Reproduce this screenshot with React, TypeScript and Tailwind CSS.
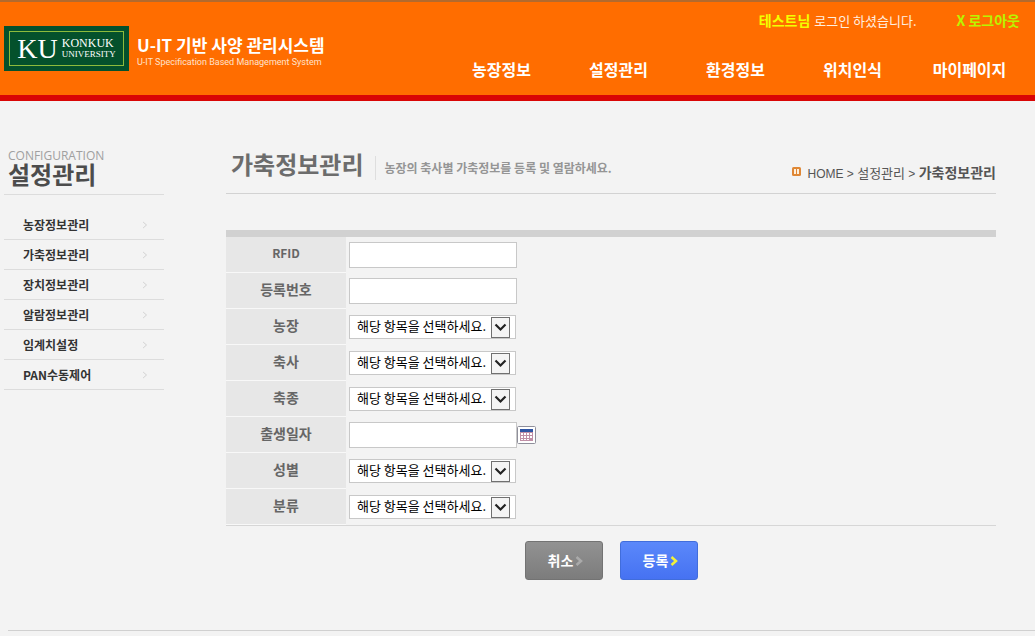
import React from "react";

const navItems = ["농장정보", "설정관리", "환경정보", "위치인식", "마이페이지"];

const sideItems = [
  "농장정보관리",
  "가축정보관리",
  "장치정보관리",
  "알람정보관리",
  "임계치설정",
  "PAN수동제어",
];

type Field = { id: string; label: string; kind: "text" | "select" | "date" };

const fields: Field[] = [
  { id: "rfid", label: "RFID", kind: "text" },
  { id: "regno", label: "등록번호", kind: "text" },
  { id: "farm", label: "농장", kind: "select" },
  { id: "barn", label: "축사", kind: "select" },
  { id: "species", label: "축종", kind: "select" },
  { id: "birth", label: "출생일자", kind: "date" },
  { id: "sex", label: "성별", kind: "select" },
  { id: "category", label: "분류", kind: "select" },
];

function Chevron({ className }: { className: string }) {
  return (
    <svg viewBox="0 0 8 10" className={className} fill="none" aria-hidden="true">
      <path d="M1.5 1 L6 5 L1.5 9" stroke="currentColor" />
    </svg>
  );
}

function CalendarIcon() {
  return (
    <svg width="19" height="18" viewBox="0 0 19 18" aria-hidden="true">
      <rect x="0.5" y="0.5" width="18" height="17" rx="1" fill="#fff" stroke="#8f8f9b" />
      <rect x="3" y="3" width="13" height="12" fill="#c08fa6" />
      <rect x="3" y="3" width="13" height="3" fill="#2f55a4" />
      <path
        d="M4 7h2v2h-2z M7 7h2v2h-2z M10 7h2v2h-2z M13 7h2v2h-2z M4 10h2v2h-2z M7 10h2v2h-2z M10 10h2v2h-2z M13 10h2v2h-2z M4 13h2v1h-2z M7 13h2v1h-2z M10 13h2v1h-2z"
        fill="#fff"
      />
    </svg>
  );
}

function Logo() {
  return (
    <div className="bg-[#04512c] p-[5px]">
      <div className="flex h-[35px] w-[115px] items-center justify-center gap-1 border border-[#8dbb3c] font-['Liberation_Serif',serif] text-white">
        <span className="text-[28px] leading-none">KU</span>
        <span className="flex flex-col">
          <span className="text-[12px] leading-3">KONKUK</span>
          <span className="text-[9px] leading-[11px]">UNIVERSITY</span>
        </span>
      </div>
    </div>
  );
}

function Header() {
  return (
    <header className="flex justify-between border-t-2 border-b-[6px] border-t-[#b26a2e] border-b-[#d90505] bg-[#ff6d00] text-white">
      <a href="#home" className="mt-6 flex items-start gap-2 pl-1">
        <Logo />
        <span className="flex flex-col pt-2 whitespace-nowrap">
          <span className="text-[17px] leading-[22px] font-bold">U-IT 기반 사양 관리시스템</span>
          <span className="font-[Roboto,sans-serif] text-[9px] leading-3 text-[#ffe2cc]">
            U-IT Specification Based Management System
          </span>
        </span>
      </a>
      <div className="flex h-[93px] flex-col items-end">
        <div className="flex gap-10 pt-2 pr-[15px] leading-5">
          <p className="text-[13px] text-[#fff0e0]">
            <strong className="mr-1 text-[14px] text-[#f4ff00]">테스트님</strong>
            로그인 하셨습니다.
          </p>
          <a href="#logout" className="text-[14px] font-bold text-[#b9f400]">
            X 로그아웃
          </a>
        </div>
        <nav className="mt-[26px] flex pr-[7px]">
          {navItems.map((item) => (
            <a key={item} href="#menu" className="w-[117px] text-center text-[16px] leading-6 font-bold">
              {item}
            </a>
          ))}
        </nav>
      </div>
    </header>
  );
}

function Sidebar() {
  return (
    <aside className="w-40 shrink-0">
      <div className="h-[46px] border-b border-[#dcdcdc] pl-1">
        <p className="font-['Open_Sans',sans-serif] text-[12px] leading-[14px] text-[#a0a0a0]">CONFIGURATION</p>
        <h2 className="text-[24px] leading-[22px] font-bold text-[#4c4c4c]">설정관리</h2>
      </div>
      <ul className="mt-[15px]">
        {sideItems.map((item) => (
          <li key={item} className="border-b border-[#dcdcdc]">
            <a
              href="#section"
              className="flex h-[29px] items-center justify-between pr-4 pl-[19px] text-[12px] font-bold text-[#333]"
            >
              {item}
              <Chevron className="h-2 w-1.5 text-[#c4c4c4]" />
            </a>
          </li>
        ))}
      </ul>
    </aside>
  );
}

function SelectBox({ id }: { id: string }) {
  return (
    <div className="relative w-[167px]">
      <select
        id={id}
        className="block h-6 w-full appearance-none border border-[#c8c8c8] bg-white pr-6 pb-0.5 pl-[7px] text-[13px] leading-5 text-black"
      >
        <option>해당 항목을 선택하세요.</option>
      </select>
      <span className="pointer-events-none absolute top-0.5 right-1.5 flex h-[21px] w-[19px] items-center justify-center border border-[#707070] bg-[#f4f4f4]">
        <svg width="13" height="9" viewBox="0 0 13 9" fill="none" aria-hidden="true">
          <path d="M1.5 1.5 L6.5 6.5 L11.5 1.5" stroke="#222" strokeWidth="2.2" />
        </svg>
      </span>
    </div>
  );
}

function FieldControl({ field }: { field: Field }) {
  if (field.kind === "select") return <SelectBox id={field.id} />;
  return (
    <div className="flex items-center">
      <input
        id={field.id}
        type="text"
        className="block h-[26px] w-[168px] border border-[#c8c8c8] bg-white px-1 text-[13px] text-black"
      />
      {field.kind === "date" && (
        <button type="button" aria-label="달력">
          <CalendarIcon />
        </button>
      )}
    </div>
  );
}

function TitleBar() {
  return (
    <div className="flex h-[45px] justify-between border-b border-[#d2d2d2]">
      <div className="flex items-start pl-[5px]">
        <h1 className="text-[24px] leading-[30px] font-bold text-[#6c6c6c]">가축정보관리</h1>
        <p className="mt-[7px] ml-3 border-l border-[#dedede] pl-2 text-[12px] leading-6 font-bold text-[#959595]">
          농장의 축사별 가축정보를 등록 및 열람하세요.
        </p>
      </div>
      <div className="mt-2.5 flex h-7 items-center gap-[7px] text-[12px] text-[#555]">
        <svg width="9" height="9" viewBox="0 0 9 9" className="mb-1" aria-hidden="true">
          <rect width="9" height="9" rx="1.5" fill="#df8735" />
          <rect x="2" y="2" width="2" height="5" fill="#fff0dc" />
          <rect x="5" y="2" width="2" height="5" fill="#fff0dc" />
        </svg>
        <p className="font-['Liberation_Sans','Noto_Sans_CJK_KR',sans-serif]">
          HOME &gt; <span className="text-[13px]">설정관리</span> &gt;{" "}
          <strong className="text-[14px]">가축정보관리</strong>
        </p>
      </div>
    </div>
  );
}

export default function App() {
  return (
    <div className="min-h-screen bg-[#f3f3f3] font-['Noto_Sans_CJK_KR',sans-serif]">
      <Header />
      <div className="flex gap-[62px] pt-12 pr-[39px] pl-1">
        <Sidebar />
        <main className="min-w-0 flex-1">
          <TitleBar />
          <form className="mt-9" onSubmit={(e) => e.preventDefault()}>
            <table className="w-full border-separate border-spacing-0 border-t-[7px] border-b border-t-[#d1d1d1] border-b-[#d6d6d6]">
              <tbody>
                {fields.map((field) => (
                  <tr key={field.id} className="h-9">
                    <th className="w-[120px] border-b border-[#f8f8f8] bg-[#e7e7e7] p-0 pb-1 text-[14px] leading-5 font-bold text-[#666]">
                      <label htmlFor={field.id} className={field.id === "rfid" ? "text-[12px]" : ""}>
                        {field.label}
                      </label>
                    </th>
                    <td className="p-0 pl-[3px]">
                      <FieldControl field={field} />
                    </td>
                  </tr>
                ))}
              </tbody>
            </table>
            <div className="mt-[15px] flex justify-center gap-[17px] text-[14px] font-bold text-white">
              <button
                type="button"
                className="flex h-[39px] w-[78px] items-center justify-center gap-0.5 rounded-[3px] border border-[#737373] bg-linear-to-b from-[#929292] to-[#7c7c7c] pl-1"
              >
                취소
                <Chevron className="h-2.5 w-2 stroke-[2.5] text-[#aaa]" />
              </button>
              <button
                type="submit"
                className="flex h-[39px] w-[78px] items-center justify-center gap-0.5 rounded-[3px] border border-[#416ddb] bg-linear-to-b from-[#5b88fa] to-[#4672f2] pl-1"
              >
                등록
                <Chevron className="h-2.5 w-2 stroke-[2.5] text-[#f2f23a]" />
              </button>
            </div>
          </form>
        </main>
      </div>
      <footer className="mt-[50px] ml-2 border-t border-[#d0d0d0]" />
    </div>
  );
}
